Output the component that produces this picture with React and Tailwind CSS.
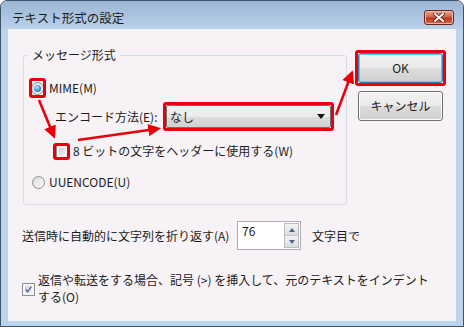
import React from 'react';

const RED = '#e8000b';

function RedBox({ className }) {
  return <div className={`pointer-events-none absolute rounded-[3px] border-[3px] border-[#e8000b] ${className}`} />;
}

function Radio({ checked }) {
  return (
    <div className="flex h-[13px] w-[13px] shrink-0 items-center justify-center rounded-full border border-[#8c8e90] bg-gradient-to-br from-[#d9dadb] to-[#fbfbfb]">
      {checked && (
        <div className="h-[7px] w-[7px] rounded-full bg-[radial-gradient(circle_at_40%_35%,#bfe9ff,#3b8fd6_55%,#164b7c)]" />
      )}
    </div>
  );
}

function Checkbox({ checked }) {
  return (
    <div className="flex h-[13px] w-[13px] shrink-0 items-center justify-center border border-[#8e8f8f] bg-[#f4f4f4] p-[2px]">
      <div className="flex h-full w-full items-center justify-center bg-gradient-to-br from-[#cbcfd5] to-[#f3f4f6]">
        {checked && (
          <svg width="9" height="9" viewBox="0 0 9 9">
            <path d="M1 4.5 L3.5 7.5 L8 0.8" fill="none" stroke="#4a5a9c" strokeWidth="1.6" />
          </svg>
        )}
      </div>
    </div>
  );
}

function Button({ children, primary }) {
  return (
    <div
      className={`flex h-[30px] w-[85px] items-center justify-center rounded-[3px] border text-[12px] ${
        primary
          ? 'border-[#3c7fb1] shadow-[inset_0_0_0_1px_#48d0f8]'
          : 'border-[#707070] shadow-[inset_0_0_0_1px_#fbfbfb]'
      } bg-[linear-gradient(#f2f2f2_0%,#ebebeb_50%,#dddddd_51%,#cfcfcf_100%)]`}
    >
      {children}
    </div>
  );
}

export default function App() {
  return (
    <div className="relative flex h-[327px] w-[464px] flex-col overflow-hidden rounded-t-[7px] border border-[#3d5466] bg-[#bdd4ed] font-['Noto_Sans_CJK_JP','Noto_Sans',sans-serif] text-[12px] text-[#1b1b1b]">
      {/* title bar */}
      <div className="flex h-[28px] shrink-0 items-start justify-between bg-gradient-to-b from-[#9cb6d4] to-[#b9d0ea] pl-[11px] pr-[9px]">
        <span className="mt-[10px] text-[12.5px] leading-[14px] text-[#1c1c1c]">テキスト形式の設定</span>
        <div className="mt-[9px] flex h-[15px] w-[30px] items-center justify-center rounded-[3px] border border-[#6b2418] bg-[linear-gradient(#e9a795_0%,#d0634c_45%,#b9371f_55%,#d8674a_100%)] shadow-[inset_0_0_0_1px_#f0b8a8]">
          <svg width="12" height="9" viewBox="0 0 12 9">
            <path d="M2 1 L10 8 M10 1 L2 8" stroke="#5a1a10" strokeWidth="3.6" strokeLinecap="round" />
            <path d="M2 1 L10 8 M10 1 L2 8" stroke="#ffffff" strokeWidth="2" strokeLinecap="round" />
          </svg>
        </div>
      </div>

      {/* client */}
      <div className="mx-[7px] mb-[5px] flex flex-1 flex-col bg-[#f6f2f6]">
        <div className="flex pl-[15px] pt-[24px]">
          {/* group box */}
          <div className="relative mt-[2px] h-[150px] w-[324px] rounded-[3px] border border-[#d4dde4]">
            <span className="absolute left-[4px] top-[-9px] bg-[#f6f2f6] px-[4px] leading-[16px]">メッセージ形式</span>

            <div className="flex flex-col pt-[22px]">
              <div className="flex h-[20px] items-center pl-[7px]">
                <div className="relative">
                  <Radio checked />
                  <RedBox className="left-[-2px] top-[-4px] h-[20px] w-[17px]" />
                </div>
                <span className="ml-[5px]">MIME(M)</span>
              </div>

              <div className="mt-[7px] flex h-[23px] items-center pl-[31px]">
                <span className="w-[111px]">エンコード方法(E):</span>
                <div className="relative">
                  <div className="flex h-[23px] w-[165px] items-center justify-between rounded-[2px] border border-[#707070] bg-[linear-gradient(#f2f2f2_0%,#ebebeb_50%,#dddddd_51%,#cfcfcf_100%)] pl-[3px] pr-[5px]">
                    <span>なし</span>
                    <svg width="8" height="5" viewBox="0 0 8 5">
                      <path d="M0 0 H8 L4 5 Z" fill="#111" />
                    </svg>
                  </div>
                  <RedBox className="left-[-3px] top-[-3px] h-[29px] w-[171px]" />
                </div>
              </div>

              <div className="mt-[13px] flex h-[20px] items-center pl-[32px]">
                <div className="relative">
                  <Checkbox />
                  <RedBox className="left-[-3px] top-[-2px] h-[17px] w-[17px]" />
                </div>
                <span className="ml-[4px]">8 ビットの文字をヘッダーに使用する(W)</span>
              </div>

              <div className="mt-[11px] flex h-[20px] items-center pl-[8px]">
                <Radio />
                <span className="ml-[4px]">UUENCODE(U)</span>
              </div>
            </div>
          </div>

          {/* buttons */}
          <div className="ml-[11px] flex flex-col gap-[8px]">
            <div className="relative">
              <Button primary>OK</Button>
              <RedBox className="left-[-3px] top-[-3px] h-[36px] w-[91px]" />
            </div>
            <Button>キャンセル</Button>
          </div>
        </div>

        {/* wrap row */}
        <div className="mt-[16px] flex items-center pl-[14px]">
          <span className="w-[215px]">送信時に自動的に文字列を折り返す(A)</span>
          <div className="flex h-[29px] w-[64px] border border-[#abadb3] bg-white">
            <span className="ml-[4px] mt-[1px] flex-1 leading-[16px]">76</span>
            <div className="m-[1px] flex w-[15px] flex-col border border-[#b8babe]">
              <div className="flex flex-1 items-center justify-center border-b border-[#c6c8cc] bg-gradient-to-b from-[#f4f4f5] to-[#dcdde0]">
                <svg width="6" height="4" viewBox="0 0 6 4"><path d="M0 4 L3 0 L6 4 Z" fill="#4f6184" /></svg>
              </div>
              <div className="flex flex-1 items-center justify-center bg-gradient-to-b from-[#f4f4f5] to-[#dcdde0]">
                <svg width="6" height="4" viewBox="0 0 6 4"><path d="M0 0 L6 0 L3 4 Z" fill="#4f6184" /></svg>
              </div>
            </div>
          </div>
          <span className="ml-[11px]">文字目で</span>
        </div>

        {/* indent row */}
        <div className="mt-[21px] flex items-start pl-[14px]">
          <div className="mt-[12px]">
            <Checkbox checked />
          </div>
          <span className="ml-[3px] leading-[17px]">
            返信や転送をする場合、記号 (&gt;) を挿入して、元のテキストをインデント
            <br />
            する(O)
          </span>
        </div>
      </div>

      {/* annotation arrows */}
      <svg className="pointer-events-none absolute left-[-1px] top-[-1px]" width="464" height="327" viewBox="0 0 464 327">
        <defs>
          <marker id="ah" markerWidth="6" markerHeight="6" refX="3" refY="3" orient="auto" markerUnits="strokeWidth">
            <path d="M0 0.6 L5 3 L0 5.4 Z" fill={RED} />
          </marker>
        </defs>
        <path d="M39 100 L53 134" stroke={RED} strokeWidth="2.6" markerEnd="url(#ah)" />
        <path d="M78 140 L156 129" stroke={RED} strokeWidth="2.6" markerEnd="url(#ah)" />
        <path d="M336 115 L351 75" stroke={RED} strokeWidth="2.6" markerEnd="url(#ah)" />
      </svg>
    </div>
  );
}
